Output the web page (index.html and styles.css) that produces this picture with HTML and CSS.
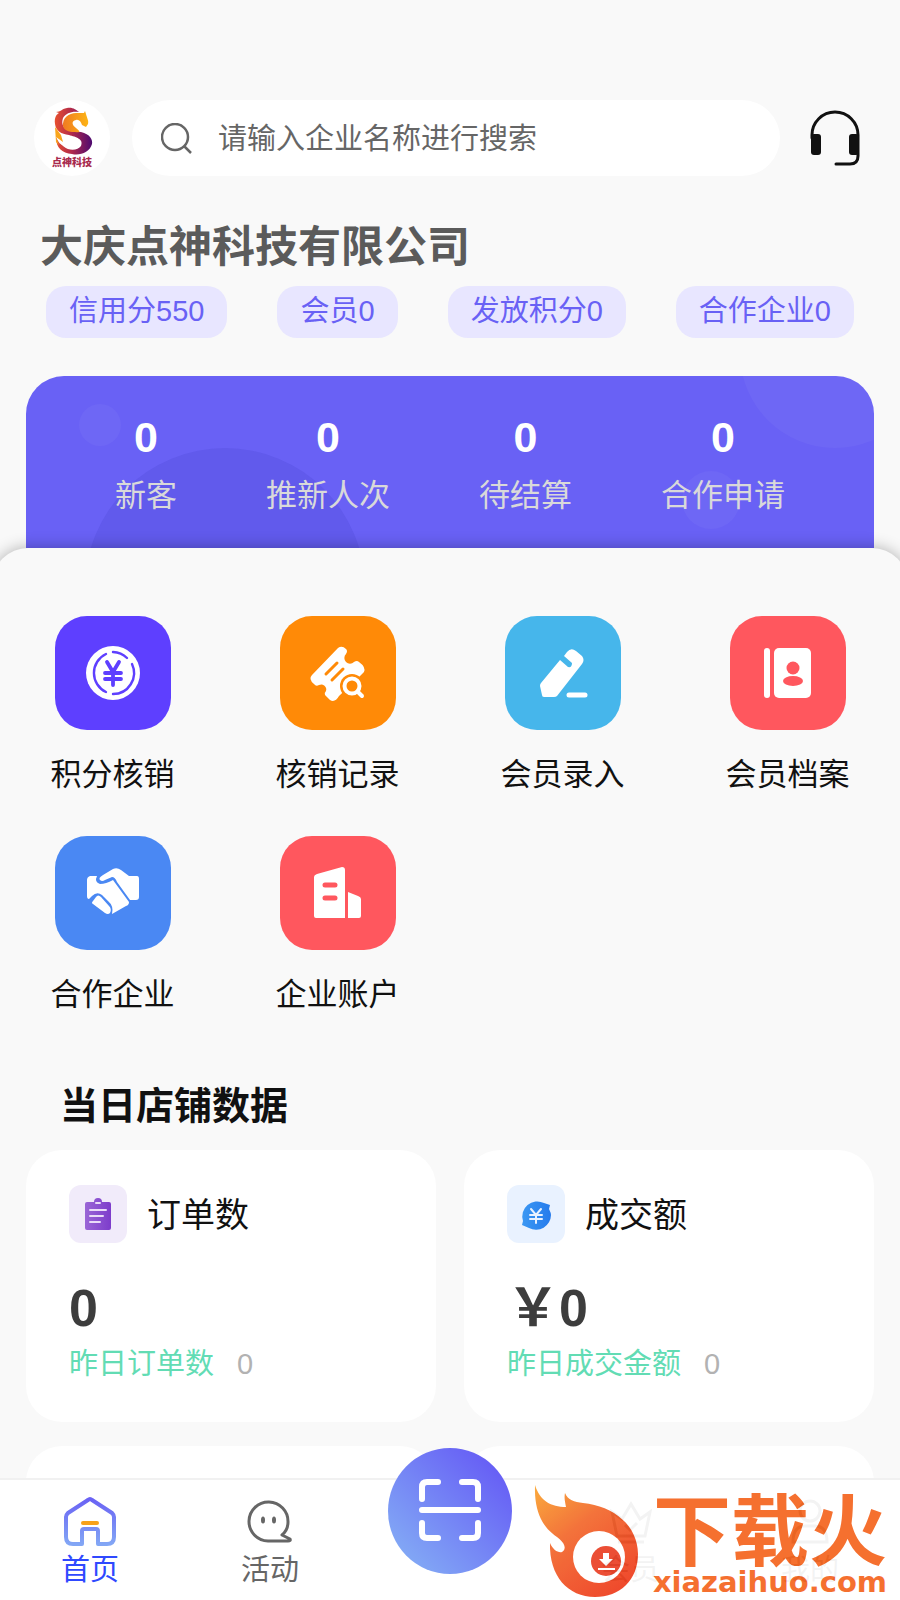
FILE: index.html
```html
<!DOCTYPE html>
<html lang="zh-CN">
<head>
<meta charset="UTF-8">
<meta name="viewport" content="width=device-width, initial-scale=1">
<title>首页</title>
<link rel="stylesheet" href="styles.css">
</head>
<body>
<main class="page">
  <header class="topbar">
    <div class="logo">
      <svg viewBox="0 0 76 76" aria-hidden="true">
        <defs>
          <linearGradient id="gTail" x1="0" y1="0" x2="1" y2="0">
            <stop offset="0" stop-color="#e8502f"/><stop offset=".45" stop-color="#b02a4c"/><stop offset="1" stop-color="#4d0a70"/>
          </linearGradient>
          <linearGradient id="gHead" x1="0" y1="0" x2="1" y2="0">
            <stop offset="0" stop-color="#f07a22"/><stop offset="1" stop-color="#fdb515"/>
          </linearGradient>
        </defs>
        <path d="M21 24C20 17 23 14 25 13L22 12C27 12 27 9 33 8C39 7 42 10 45 12C38 11 32 13 29 18C27 24 29 28 36 31L47 32C56 34 59 40 58 44C56 52 46 56 38 54C28 53 22 48 22 37C25 44 27 44 29 46C36 52 44 50 47 46C50 39 42 37 35 35C27 34 22 31 21 24Z" fill="url(#gTail)"/>
        <path d="M29 26C28 18 35 13 42 13L50 13L51 11L52 14C53 18 55 21 54 24L52 27L48 25C47 22 45 19 42 20C37 21 38 25 42 28C46 31 47 33 41 32C34 32 30 30 29 26Z" fill="url(#gHead)"/>
        <path d="M21 27L27 35L29 42L22 37L25 45L22 42Z" fill="#f9a51a"/>
      </svg>
      <span class="logo-text">点神科技</span>
    </div>
    <label class="search">
      <svg class="search-icon" viewBox="0 0 32 32" aria-hidden="true"><circle cx="14" cy="14" r="13"/><path d="M23 23L30 30"/></svg>
      <input type="search" placeholder="请输入企业名称进行搜索" aria-label="搜索企业">
    </label>
    <button class="service" aria-label="客服">
      <svg viewBox="0 0 50 56" aria-hidden="true">
        <path d="M2 28V25A23 23 0 0 1 48 25V46Q48 54 40 54H26" fill="none" stroke="#111" stroke-width="3" stroke-linecap="round"/>
        <rect x="1" y="24" width="10" height="21" rx="3" fill="#111"/><rect x="39" y="24" width="10" height="21" rx="3" fill="#111"/>
      </svg>
    </button>
  </header>

  <h1>大庆点神科技有限公司</h1>
  <div class="tags">
    <span class="tag">信用分550</span>
    <span class="tag">会员0</span>
    <span class="tag">发放积分0</span>
    <span class="tag">合作企业0</span>
  </div>

  <section class="banner">
    <svg class="banner-bg" viewBox="0 0 848 172" preserveAspectRatio="none" aria-hidden="true">
      <circle cx="74" cy="49" r="21" fill="#fff" opacity=".04"/>
      <circle cx="199" cy="212" r="140" fill="#22219f" opacity=".1"/>
      <circle cx="809" cy="-23" r="95" fill="#fff" opacity=".04"/>
      <circle cx="685" cy="124" r="29" fill="#fff" opacity=".04"/>
    </svg>
    <div class="stat"><b>0</b><span>新客</span></div>
    <div class="stat"><b>0</b><span>推新人次</span></div>
    <div class="stat"><b>0</b><span>待结算</span></div>
    <div class="stat"><b>0</b><span>合作申请</span></div>
  </section>

  <section class="panel">
    <nav class="menu">
      <a href="#" class="menu-item">
        <span class="tile violet"><svg viewBox="0 0 60 60" aria-hidden="true">
          <circle cx="30" cy="30" r="27" fill="#fff"/>
          <g fill="none" stroke="#5e3fff" stroke-width="2.4" stroke-linecap="round">
            <path d="M30 9A21 21 0 0 1 44 15M49 21A21 21 0 0 1 30 51M23 49A21 21 0 0 1 23 11"/>
            <path d="M24 19L30 29L36 19M30 29V42M22 30H38M22 36H38" stroke-width="3.8"/>
          </g></svg></span>
        <span>积分核销</span>
      </a>
      <a href="#" class="menu-item">
        <span class="tile orange"><svg viewBox="0 0 60 60" aria-hidden="true">
          <path d="M4 32L30 5Q34 2 38 6Q40 8 38 11A5 5 0 0 0 46 19Q49 17 51 19Q58 24 56 29L49 36L31 53Q27 60 22 57L17 52Q16 50 18 48A5 5 0 0 0 11 42Q8 44 6 41Q0 36 4 32Z" fill="#fff"/>
          <path d="M18 31L29 20M24 37L35 26" stroke="#ff8a07" stroke-width="3" stroke-linecap="round"/>
          <circle cx="44" cy="43" r="12" fill="#ff8a07"/><circle cx="44" cy="43" r="7.5" fill="none" stroke="#fff" stroke-width="4"/>
          <path d="M50 49L54 53" stroke="#fff" stroke-width="4" stroke-linecap="round"/></svg></span>
        <span>核销记录</span>
      </a>
      <a href="#" class="menu-item">
        <span class="tile sky"><svg viewBox="0 0 60 60" aria-hidden="true">
          <path d="M27 17L35 24Q39 25 39 20L31 13L34 9Q38 4 43 8L49 13Q52 17 49 21L24 53Q23 54 21 54H11Q9 54 9 52L7 43Q7 41 8 40Z" fill="#fff"/>
          <path d="M36 52H52" stroke="#fff" stroke-width="5" stroke-linecap="round"/></svg></span>
        <span>会员录入</span>
      </a>
      <a href="#" class="menu-item">
        <span class="tile red"><svg viewBox="0 0 60 60" aria-hidden="true">
          <rect x="6" y="5" width="6" height="50" rx="3" fill="#fff"/><rect x="16" y="5" width="37" height="50" rx="5" fill="#fff"/>
          <circle cx="35" cy="25" r="6.5" fill="#ff575e"/><ellipse cx="35" cy="38" rx="10" ry="5" fill="#ff575e"/></svg></span>
        <span>会员档案</span>
      </a>
      <a href="#" class="menu-item">
        <span class="tile blue"><svg viewBox="0 0 60 60" aria-hidden="true">
          <path d="M7 13H14Q11 19 17 21Q23 21 30 17L46 39Q46 42 43 43L29 51Q31 43 25 38L19 32Q14 28 9 33L6 36Q4 36 4 33V17Q4 14 7 13Z" fill="#fff"/>
          <path d="M17 17Q15 15 20 12L30 6Q34 4 38 7L46 13H54Q56 13 56 16V34Q56 37 53 37H47L34 19Q32 14 29 14L22 17Q19 19 17 17Z" fill="#fff"/>
          <path d="M10 38L13 34Q15 31 18 34L26 43Q29 46 27 50Q25 52 22 50L10 41Q8 40 10 38Z" fill="#fff"/></svg></span>
        <span>合作企业</span>
      </a>
      <a href="#" class="menu-item">
        <span class="tile red"><svg viewBox="0 0 60 60" aria-hidden="true">
          <path d="M6 14Q6 12 9 11L34 4Q37 4 37 7V55H8Q6 55 6 53ZM40 29L50 33Q53 34 53 36V53Q53 55 51 55H40Z" fill="#fff"/>
          <path d="M17 22H27M17 35H27" stroke="#ff575e" stroke-width="5" stroke-linecap="round"/></svg></span>
        <span>企业账户</span>
      </a>
    </nav>

    <h2>当日店铺数据</h2>
    <div class="cards">
      <article class="card">
        <div class="card-head">
          <span class="card-icon lilac"><svg viewBox="0 0 58 58" aria-hidden="true">
            <defs><linearGradient id="gClip"><stop offset="0" stop-color="#9a66d6"/><stop offset="1" stop-color="#7d3ccb"/></linearGradient></defs>
            <path d="M18 17H25Q25 13 29 13Q33 13 33 17H40Q42 17 42 19V43Q42 45 40 45H18Q16 45 16 43V19Q16 17 18 17Z" fill="url(#gClip)"/>
            <path d="M27 18H31M21 25H37M21 31H34M21 37H31" stroke="#eadcf8" stroke-width="2" stroke-linecap="round"/></svg></span>
          <h3>订单数</h3>
        </div>
        <p class="value">0</p>
        <p class="prev">昨日订单数<span>0</span></p>
      </article>
      <article class="card">
        <div class="card-head">
          <span class="card-icon ice"><svg viewBox="0 0 58 58" aria-hidden="true">
            <defs><linearGradient id="gCoin"><stop offset="0" stop-color="#3b98f3"/><stop offset="1" stop-color="#257bec"/></linearGradient></defs>
            <path d="M37 18L43 20L42 24Q44 28 44 30A15 15 0 0 1 22 43L15 40L16 36A15 15 0 0 1 37 18Z" fill="url(#gCoin)"/>
            <path d="M24 24L29 30L34 24M29 30V38M23 30H35M23 34H35" fill="none" stroke="#e9f2ff" stroke-width="2" stroke-linecap="round"/></svg></span>
          <h3>成交额</h3>
        </div>
        <p class="value">￥0</p>
        <p class="prev">昨日成交金额<span>0</span></p>
      </article>
      <article class="card"></article>
      <article class="card"></article>
    </div>
  </section>
</main>

<nav class="tabbar">
  <a href="#" class="tab active">
    <svg viewBox="0 0 54 50" aria-hidden="true">
      <defs><linearGradient id="gHome" x1="0" y1="0" x2="0" y2="1"><stop offset="0" stop-color="#6a62f4"/><stop offset="1" stop-color="#82a6f5"/></linearGradient></defs>
      <path d="M25 3Q27 1 29 3L49 16Q51 18 51 20V40Q51 47 44 47H35V34Q35 32 33 32H21Q19 32 19 34V47H10Q3 47 3 40V20Q3 18 5 16Z" fill="none" stroke="url(#gHome)" stroke-width="4" stroke-linejoin="round"/>
      <path d="M20 26H34" stroke="#f7a11b" stroke-width="4" stroke-linecap="round"/></svg>
    <span>首页</span>
  </a>
  <a href="#" class="tab">
    <svg viewBox="0 0 54 50" aria-hidden="true">
      <path d="M25 44A19.500 19.500 0 1 1 45 25Q45 33 39 38L47 42Q48 44 45 44Z" fill="none" stroke="#666" stroke-width="3" stroke-linejoin="round"/>
      <ellipse cx="20" cy="23" rx="2" ry="3.5" fill="#666"/><ellipse cx="31" cy="23" rx="2" ry="3.5" fill="#666"/></svg>
    <span>活动</span>
  </a>
  <button class="scan" aria-label="扫一扫">
    <svg viewBox="0 0 64 64" aria-hidden="true"><path d="M4 20V8Q4 3 9 3H20M44 3H55Q60 3 60 8V20M60 44V54Q60 59 55 59H44M20 59H9Q4 59 4 54V44M4 31H60"/></svg>
  </button>
  <a href="#" class="tab">
    <svg viewBox="0 0 54 50" aria-hidden="true"><path d="M14 39L9 15L19 22L28 7L37 22L47 15L42 39ZM15 45H41M22 28L27 33L34 26" fill="none" stroke="#666" stroke-width="3"/></svg>
    <span>会员</span>
  </a>
  <a href="#" class="tab">
    <svg viewBox="0 0 54 50" aria-hidden="true"><g fill="none" stroke="#666" stroke-width="3"><circle cx="27" cy="14" r="10"/><path d="M10 45Q10 29 22 29H32Q44 29 44 45Z"/></g></svg>
    <span>我的</span>
  </a>
</nav>

<div class="download-mark">
  <svg viewBox="0 0 110 120" aria-hidden="true">
    <defs><linearGradient id="gFlame" x1="0" y1="0" x2=".7" y2="1"><stop offset="0" stop-color="#fba42c"/><stop offset=".45" stop-color="#f2662b"/><stop offset="1" stop-color="#ee3c1c"/></linearGradient></defs>
    <path d="M5 3C10 19 21 25 36 25C35 19 34 16 35 11C38 18 44 20 53 21C84 24 108 44 108 72C108 98 90 115 65 115C38 115 19 94 20 61C23 68 28 71 32 70C37 67 35 61 27 55C14 46 4 32 5 3Z" fill="url(#gFlame)"/>
    <circle cx="69" cy="75" r="26" fill="#fff"/><circle cx="76" cy="79" r="15" fill="#ea3f24"/>
    <path d="M73 71H79V77H83L76 84L69 77H73ZM68 86H85V88H68Z" fill="#fff"/></svg>
  <div class="mark-text"><strong>下载火</strong><span>xiazaihuo.com</span></div>
</div>
</body>
</html>
```
FILE: styles.css
```css
:root{
  --bg: #f9f9f9;
  --main: #6961f5;
  --text: #111;
  --grey: #666;
}
*{ box-sizing: border-box; }
html,body{ margin: 0; height: 100%; }
body{
  display: flex; flex-direction: column; overflow: hidden;
  background: var(--bg); color: var(--text);
  font-family: "Liberation Sans", "Noto Sans CJK SC", sans-serif;
  font-size: 29px;
}
h1,h2,h3,p{ margin: 0; }
a{ color: inherit; text-decoration: none; }
button{ border: 0; padding: 0; background: none; cursor: pointer; }
svg{ display: block; }

.page{ flex: 1; min-height: 0; overflow-x: hidden; overflow-y: auto; scrollbar-width: none; }

.topbar{ display: flex; align-items: center; padding: 100px 40px 0 34px; }
.logo{
  position: relative; width: 76px; height: 76px; border-radius: 50%;
  background: #fff; flex-shrink: 0;
}
.logo-text{
  position: absolute; left: 0; right: 0; bottom: 7px; text-align: center;
  font-size: 10px; line-height: 12px; font-weight: 900; color: #a82a4e;
}
.search{
  flex: 1; display: flex; align-items: center; gap: 25px; min-width: 0;
  height: 76px; margin: 0 30px 0 22px; padding: 2px 29px 0;
  border-radius: 38px; background: #fff;
}
.search-icon{ width: 32px; height: 32px; flex-shrink: 0; fill: none; stroke: var(--grey); stroke-width: 2.5; }
.search input{
  flex: 1; min-width: 0; border: 0; padding: 0; outline: none; background: none;
  font: inherit; color: var(--grey); appearance: none;
}
.search input::placeholder{ color: var(--grey); opacity: 1; }
.service svg{ width: 50px; height: 56px; }

h1{
  margin: 43px 40px 0; font-size: 43px; line-height: 56px; font-weight: 700; color: #5b5b5b;
}
.tags{ display: flex; justify-content: space-between; padding: 11px 46px 0; }
.tag{
  padding: 0 23px; border-radius: 20px; background: #e8e6ff; color: var(--main);
  line-height: 50px; height: 52px;
}

.banner{
  position: relative; display: flex; justify-content: space-evenly; overflow: hidden;
  height: 172px; margin: 38px 26px 0; padding-top: 35px;
  border-radius: 38px 38px 0 0; background: var(--main);
}
.banner-bg{ position: absolute; inset: 0; width: 100%; height: 100%; }
.stat{ position: relative; text-align: center; color: #d9d9d9; font-size: 31px; }
.stat b{ display: block; font-size: 43px; line-height: 52px; color: #fff; }
.stat span{ display: block; line-height: 66px; }

.panel{
  position: relative; margin: 0 -8px; padding: 68px 8px 0;
  border-radius: 36px 36px 0 0; background: var(--bg);
  box-shadow: 0 0 16px rgba(0,0,0,.3);
}
.menu{ display: grid; grid-template-columns: repeat(4, 1fr); row-gap: 24px; }
.menu-item{
  display: flex; flex-direction: column; align-items: center; gap: 22px;
  font-size: 31px; line-height: 46px; padding-bottom: 14px;
}
.tile{
  display: grid; place-items: center; width: 116px; height: 114px; border-radius: 32px;
}
.tile svg{ width: 60px; height: 60px; }
.violet{ background: #5e3fff; }
.orange{ background: #ff8a07; }
.sky{ background: #46b6eb; }
.red{ background: #ff575e; }
.blue{ background: #4a88f3; }

h2{ margin: 46px 60px 0; font-size: 38px; line-height: 56px; font-weight: 700; }
.cards{
  display: grid; grid-template-columns: 1fr 1fr; gap: 24px 28px; padding: 16px 26px;
}
.card{ height: 272px; padding: 34px 43px; border-radius: 36px; background: #fff; }
.card-head{ display: flex; align-items: center; gap: 20px; }
.card-icon{ width: 58px; height: 58px; border-radius: 12px; }
.lilac{ background: #f1ebfa; }
.ice{ background: #e9f2ff; }
h3{ font-size: 34px; line-height: 58px; font-weight: 400; padding-top: 2px; }
.value{
  margin-top: 32px; font-size: 52px; line-height: 64px; font-weight: 700; color: #3d3d3d;
}
.prev{ line-height: 48px; color: #62dcb4; }
.prev span{ margin-left: 23px; color: #b2b2b2; }

.tabbar{
  position: relative; display: grid; grid-template-columns: repeat(5, 1fr); flex-shrink: 0;
  height: 122px; border-top: 2px solid #f1f1f1; background: #fff; color: var(--grey);
}
.tab{
  display: flex; flex-direction: column; align-items: center; padding-top: 17px; line-height: 46px;
}
.tab svg{ width: 54px; height: 50px; }
.tab.active{ color: #2f49ff; }
.scan{
  display: grid; place-items: center; justify-self: center;
  width: 124px; height: 126px; margin-top: -32px; border-radius: 50%;
  background: linear-gradient(45deg, #83abf5 10%, #6760f5 85%);
}
.scan svg{
  width: 64px; height: 64px; fill: none; stroke: #fff; stroke-width: 6;
  stroke-linecap: round;
}

.download-mark{
  position: fixed; right: 0; bottom: 0; display: flex;
  width: 370px; height: 118px; background: #fff; opacity: .92; pointer-events: none;
  color: #f5641e;
}
.download-mark svg{ width: 110px; height: 120px; flex-shrink: 0; }
.mark-text{ display: flex; flex-direction: column; flex: 1; padding-top: 16px; text-align: center; }
.mark-text strong{ font-size: 78px; line-height: 70px; font-weight: 700; }
.mark-text span{
  font-family: "DejaVu Sans", sans-serif; font-size: 29px; line-height: 28px; font-weight: 700;
}
```
